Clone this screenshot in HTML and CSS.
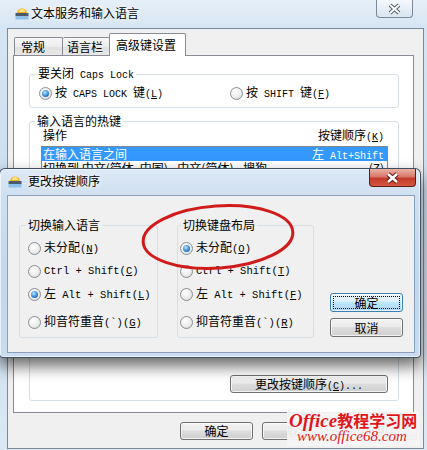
FILE: index.html
```html
<!DOCTYPE html>
<html lang="zh-CN">
<head>
  <meta charset="UTF-8">
  <meta name="viewport" content="width=device-width, initial-scale=1.0">
  <title>文本服务和输入语言</title>
  <link rel="stylesheet" href="styles.css">
</head>
<body>
  <!-- background window -->
  <div class="win">
    <div class="win-title">
      <svg class="app-icon" width="14" height="14" viewBox="0 0 14 14">
        <path d="M2 7 A5 4.5 0 0 1 12 7 Z" fill="#f3b21c"/>
        <path d="M4 6 A3 3 0 0 1 10 6 Z" fill="#fde48a"/>
        <rect x="0.5" y="7" width="13" height="3" fill="#4c5a6c"/>
        <rect x="0.5" y="10" width="13" height="3.5" fill="#8fc0ea"/>
      </svg>
      <span class="caption">文本服务和输入语言</span>
      <div class="win-close">
        <svg width="37" height="18" viewBox="0 0 37 18">
          <path d="M14 5 L23 13 M23 5 L14 13" stroke="#56626f" stroke-width="4"/>
          <path d="M14 5 L23 13 M23 5 L14 13" stroke="#fff" stroke-width="2"/>
        </svg>
      </div>
    </div>
    <div class="win-body">
      <div class="tabs">
        <div class="tab">常规</div>
        <div class="tab">语言栏</div>
        <div class="tab active">高级键设置</div>
      </div>
      <div class="panel">
        <fieldset class="group caps">
          <legend>要关闭<span class="en"> Caps Lock</span></legend>
          <div class="opts-row">
            <label class="opt first"><span class="radio on"><span class="dot"></span></span><span>按<span class="en"> CAPS LOCK </span>键<span class="en">(<u>L</u>)</span></span></label>
            <label class="opt"><span class="radio"></span><span>按<span class="en"> SHIFT </span>键<span class="en">(<u>F</u>)</span></span></label>
          </div>
        </fieldset>
        <fieldset class="group hotkeys">
          <legend>输入语言的热键</legend>
          <div class="list-head">
            <span>操作</span>
            <span>按键顺序<span class="en">(<u>K</u>)</span></span>
          </div>
          <div class="list">
            <div class="row sel"><span>在输入语言之间</span><span>左<span class="en"> Alt+Shift</span></span></div>
            <div class="row"><span>切换到 中文(简体, 中国) - 中文(简体) - 搜狗</span><span>(Z)</span></div>
          </div>
          <div class="list-actions">
            <button class="btn change">更改按键顺序<span class="en">(<u>C</u>)...</span></button>
          </div>
        </fieldset>
      </div>
      <div class="actions">
        <button class="btn">确定</button>
        <button class="btn">取消</button>
        <button class="btn">应用(<u>A</u>)</button>
      </div>
    </div>
  </div>

  <!-- change key sequence dialog -->
  <div class="dialog">
    <div class="dlg-title">
      <svg class="app-icon" width="14" height="14" viewBox="0 0 14 14">
        <path d="M2 7 A5 4.5 0 0 1 12 7 Z" fill="#f3b21c"/>
        <path d="M4 6 A3 3 0 0 1 10 6 Z" fill="#fde48a"/>
        <rect x="0.5" y="7" width="13" height="3" fill="#4c5a6c"/>
        <rect x="0.5" y="10" width="13" height="3.5" fill="#8fc0ea"/>
      </svg>
      <span class="caption">更改按键顺序</span>
      <div class="dlg-close">
        <svg width="47" height="18" viewBox="0 0 47 18">
          <path d="M19 5 L28 13 M28 5 L19 13" stroke="#5e1a12" stroke-width="4.5"/>
          <path d="M19 5 L28 13 M28 5 L19 13" stroke="#fff" stroke-width="2.5"/>
        </svg>
      </div>
    </div>
    <div class="dlg-body">
      <fieldset class="group lang">
        <legend>切换输入语言</legend>
        <div class="opts">
          <label class="opt"><span class="radio"></span><span>未分配<span class="en">(<u>N</u>)</span></span></label>
          <label class="opt"><span class="radio"></span><span class="en">Ctrl + Shift(<u>C</u>)</span></label>
          <label class="opt"><span class="radio on"><span class="dot"></span></span><span>左<span class="en"> Alt + Shift(<u>L</u>)</span></span></label>
          <label class="opt last"><span class="radio"></span><span>抑音符重音<span class="en">(`)(<u>G</u>)</span></span></label>
        </div>
      </fieldset>
      <fieldset class="group layout">
        <legend>切换键盘布局</legend>
        <div class="opts">
          <label class="opt"><span class="radio on"><span class="dot"></span></span><span>未分配<span class="en">(<u>O</u>)</span></span></label>
          <label class="opt"><span class="radio"></span><span class="en">Ctrl + Shift(<u>T</u>)</span></label>
          <label class="opt"><span class="radio"></span><span>左<span class="en"> Alt + Shift(<u>F</u>)</span></span></label>
          <label class="opt last"><span class="radio"></span><span>抑音符重音<span class="en">(`)(<u>R</u>)</span></span></label>
        </div>
      </fieldset>
      <div class="dlg-buttons">
        <button class="btn default">确定</button>
        <button class="btn">取消</button>
      </div>
    </div>
  </div>

  <!-- hand-drawn red mark -->
  <svg class="mark" width="427" height="450" viewBox="0 0 427 450">
    <ellipse cx="218" cy="237" rx="75" ry="31" transform="rotate(-4 218 237)" fill="none" stroke="#d11b1b" stroke-width="3"/>
  </svg>

  <div class="watermark">
    <div class="wm-top"><span class="wm-en">Office</span>教程学习网</div>
    <div class="wm-url">www.office68.com</div>
  </div>
</body>
</html>
```

FILE: styles.css
```css
* {
  box-sizing: border-box;
}
body {
  margin: 0;
  width: 427px;
  height: 450px;
  overflow: hidden;
  position: relative;
  font-family: "Noto Sans CJK SC", sans-serif;
  font-size: 12px;
  line-height: 14px;
  color: #000;
  background: #d3e3f2;
}
.en {
  font-family: "Liberation Mono", "Noto Sans CJK SC", monospace;
  font-size: 10px;
  white-space: pre;
}
.dialog .en {
  font-size: 10.5px;
}
button {
  font-family: inherit;
  font-size: 12px;
  color: #000;
}

/* background window */
.win {
  width: 427px;
  height: 450px;
  background: linear-gradient(to bottom, #e6eff8 0, #d6e5f3 28px, #c9dcef 220px, #dbe8f4 450px);
}
.win-title {
  display: flex;
  align-items: flex-start;
  height: 28px;
  padding-left: 15px;
}
.app-icon {
  margin-top: 6px;
  flex: none;
}
.caption {
  margin-left: 2px;
  margin-top: 6px;
  text-shadow: 0 0 6px #fff, 0 0 3px #fff;
}
.win-close {
  margin-left: auto;
  margin-right: 14px;
  width: 37px;
  height: 18px;
  border: 1px solid #7b8898;
  border-top: none;
  border-radius: 0 0 4px 4px;
  background: linear-gradient(to bottom, rgba(255,255,255,0.6), rgba(214,226,238,0.6));
}
.win-close svg {
  display: block;
  margin-left: -1px;
}
.win-body {
  margin-left: 7px;
  width: 417px;
  height: 421px;
  background: #f0f0f0;
  border: 1px solid #7d8998;
  padding-top: 4px;
}

/* tabs */
.tabs {
  display: flex;
  align-items: flex-end;
  height: 22px;
  padding-left: 6px;
}
.tab {
  height: 18px;
  line-height: 16px;
  padding: 1px 0 0 6px;
  border: 1px solid #898c95;
  border-bottom: none;
  border-radius: 2px 2px 0 0;
  background: linear-gradient(to bottom, #f7f7f7, #ececec 50%, #e0e0e0 51%, #e8e8e8);
  width: 49px;
}
.tab + .tab {
  width: 48px;
  padding-left: 4px;
  border-left: none;
}
.tab.active {
  width: 77px;
  height: 23px;
  margin-left: -2px;
  margin-bottom: -1px;
  padding: 3px 0 0 6px;
  border-left: 1px solid #898c95;
  background: #fff;
  position: relative;
  z-index: 1;
}
.panel {
  margin-left: 5px;
  width: 401px;
  height: 358px;
  background: #fff;
  border: 1px solid #898c95;
  padding: 10px 0 0 15px;
}

/* group boxes */
.group {
  margin: 0;
  border: 1px solid #d5dfe5;
  border-radius: 3px;
  min-width: 0;
}
.group legend {
  padding: 0 2px;
  line-height: 14px;
}
.caps {
  width: 370px;
  padding: 3px 0 7px 9px;
}
.caps legend {
  margin-left: -3px;
}
.opts-row {
  display: flex;
}
.opt {
  display: flex;
  align-items: center;
  gap: 3px;
  height: 14px;
  white-space: nowrap;
}
.opt.first {
  width: 191px;
}
.radio {
  width: 13px;
  height: 13px;
  flex: none;
  border-radius: 50%;
  border: 1px solid #8a8f94;
  background: radial-gradient(circle at 40% 35%, #ffffff 0, #ececec 55%, #cdd0d3 100%);
  display: grid;
  place-items: center;
}
.radio .dot {
  width: 7px;
  height: 7px;
  border-radius: 50%;
  background: radial-gradient(circle at 40% 35%, #b4e6ff 0, #3a8ad6 55%, #0d4a8a 100%);
}
.hotkeys {
  width: 370px;
  margin-top: 6px;
  padding: 0 10px 7px 11px;
}
.hotkeys legend {
  margin-left: -6px;
}
.list-head {
  display: flex;
  justify-content: space-between;
  height: 14px;
  padding: 0 4px 0 2px;
  margin-bottom: 4px;
}
.list {
  height: 205px;
  border: 1px solid #828790;
  background: #fff;
}
.row {
  display: flex;
  justify-content: space-between;
  height: 14px;
  padding: 0 3px 0 1px;
  white-space: nowrap;
}
.row.sel {
  background: #3399ff;
  color: #fff;
}
.list-actions {
  display: flex;
  justify-content: flex-end;
  margin-top: 24px;
}

/* buttons */
.btn {
  height: 18px;
  width: 73px;
  padding: 0;
  line-height: 16px;
  border: 1px solid #707070;
  border-radius: 3px;
  background: linear-gradient(to bottom, #f2f2f2 0, #ebebeb 45%, #dddddd 50%, #cfcfcf 100%);
  box-shadow: inset 0 0 0 1px rgba(255,255,255,0.7);
}
.btn.change {
  width: 158px;
}
.actions {
  display: flex;
  justify-content: flex-end;
  gap: 9px;
  margin-top: 9px;
  padding-right: 6px;
}

/* dialog */
.dialog {
  position: absolute;
  left: -1px;
  top: 168px;
  width: 422px;
  height: 190px;
  border: 1px solid rgba(38, 52, 72, 0.85);
  border-radius: 6px 6px 4px 4px;
  background: linear-gradient(to bottom, #dde9f6 0, #cddff0 30px, #c2d7ec 120px, #cadcee 190px);
  box-shadow: 0 8px 16px rgba(0, 0, 0, 0.6), inset 0 0 0 1px rgba(255,255,255,0.6);
  padding: 0 5px 4px 7px;
}
.dlg-title {
  display: flex;
  align-items: flex-start;
  height: 26px;
  margin-left: -7px;
  margin-right: -5px;
  padding-left: 8px;
}
.dlg-title .app-icon {
  margin-top: 5px;
}
.dlg-title .caption {
  margin-left: 6px;
  margin-top: 5px;
}
.dlg-close {
  margin-left: auto;
  margin-right: 4px;
  width: 47px;
  height: 18px;
  border: 1px solid #5b1d16;
  border-top: none;
  border-radius: 0 0 4px 4px;
  background: linear-gradient(to bottom, #e9b3a6 0, #d8786b 45%, #c23b2c 55%, #d6573f 100%);
}
.dlg-close svg {
  display: block;
  margin-left: -1px;
}
.dlg-body {
  height: 158px;
  border: 1px solid #8aa0ba;
  background: #f0f0f0;
  display: flex;
  align-items: flex-start;
}
.lang,
.layout {
  margin-top: 22px;
  padding: 9px 0 8px 8px;
}
.lang {
  margin-left: 11px;
  width: 139px;
}
.lang legend {
  margin-left: -2px;
}
.layout {
  margin-left: 19px;
  width: 137px;
  padding-left: 2px;
}
.layout legend {
  margin-left: 1px;
}
.opts {
  display: flex;
  flex-direction: column;
  gap: 9px;
}
.opt.last {
  margin-top: 5px;
}
.dlg-buttons {
  display: flex;
  flex-direction: column;
  gap: 6px;
  margin-left: 16px;
  margin-top: 97px;
}
.dlg-buttons .btn {
  height: 19px;
}
.btn.default {
  border-color: #3c7fb1;
  background: linear-gradient(to bottom, #eaf6fd 0, #d9f0fc 45%, #bee6fd 50%, #a7d9f5 100%);
  outline: 1px dotted #000;
  outline-offset: -4px;
}

/* overlays */
.mark {
  position: absolute;
  left: 0;
  top: 0;
  pointer-events: none;
}
.watermark {
  position: absolute;
  left: 287px;
  top: 412px;
  width: 132px;
  height: 34px;
  padding-left: 2px;
  background: rgba(244, 244, 244, 0.95);
  color: #e0161b;
  text-shadow: 0 0 2px #fff;
}
.wm-top {
  font-family: "Noto Sans CJK SC", sans-serif;
  font-weight: bold;
  font-size: 16px;
  line-height: 17px;
  white-space: nowrap;
}
.wm-en {
  font-family: "Liberation Serif", serif;
  font-style: italic;
  font-size: 19px;
}
.wm-url {
  font-family: "Liberation Serif", serif;
  font-style: italic;
  font-size: 15px;
  line-height: 14px;
  padding-left: 8px;
}
```
